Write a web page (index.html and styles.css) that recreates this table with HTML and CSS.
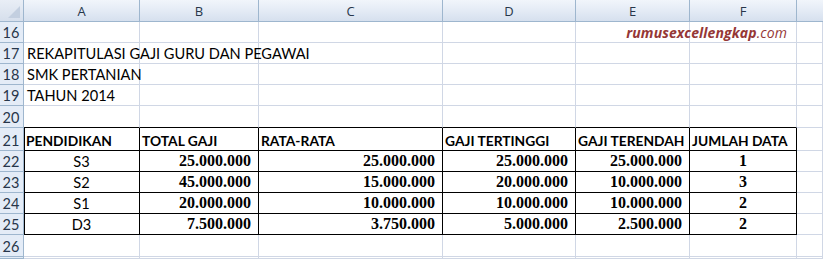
FILE: index.html
```html
<!DOCTYPE html>
<html>
<head>
<meta charset="utf-8">
<link rel="stylesheet" href="styles.css">
</head>
<body>
<div class="sheet">
  <div class="corner"><span class="tri"></span></div>
  <div class="colh">A</div><div class="colh">B</div><div class="colh">C</div><div class="colh">D</div><div class="colh">E</div><div class="colh">F</div><div class="colh last"></div>

  <div class="rowh">16</div>
  <div class="c"></div><div class="c"></div><div class="c"></div><div class="c"></div><div class="c"></div><div class="c wm-cell"><span class="wm"><b>rumusexcellengkap</b>.com</span></div><div class="c"></div>

  <div class="rowh">17</div>
  <div class="c t overflow">REKAPITULASI GAJI GURU DAN PEGAWAI</div><div class="c"></div><div class="c"></div><div class="c"></div><div class="c"></div><div class="c"></div><div class="c"></div>

  <div class="rowh">18</div>
  <div class="c t overflow">SMK PERTANIAN</div><div class="c"></div><div class="c"></div><div class="c"></div><div class="c"></div><div class="c"></div><div class="c"></div>

  <div class="rowh">19</div>
  <div class="c t overflow">TAHUN 2014</div><div class="c"></div><div class="c"></div><div class="c"></div><div class="c"></div><div class="c"></div><div class="c"></div>

  <div class="rowh">20</div>
  <div class="c bt"></div><div class="c bt"></div><div class="c bt"></div><div class="c bt"></div><div class="c bt"></div><div class="c bt"></div><div class="c"></div>

  <div class="rowh">21</div>
  <div class="c b bl th">PENDIDIKAN</div><div class="c b th">TOTAL GAJI</div><div class="c b th">RATA-RATA</div><div class="c b th">GAJI TERTINGGI</div><div class="c b th">GAJI TERENDAH</div><div class="c b th">JUMLAH DATA</div><div class="c"></div>

  <div class="rowh">22</div>
  <div class="c b bl t ctr">S3</div><div class="c b n">25.000.000</div><div class="c b n">25.000.000</div><div class="c b n">25.000.000</div><div class="c b n">25.000.000</div><div class="c b n ctr">1</div><div class="c"></div>

  <div class="rowh">23</div>
  <div class="c b bl t ctr">S2</div><div class="c b n">45.000.000</div><div class="c b n">15.000.000</div><div class="c b n">20.000.000</div><div class="c b n">10.000.000</div><div class="c b n ctr">3</div><div class="c"></div>

  <div class="rowh">24</div>
  <div class="c b bl t ctr">S1</div><div class="c b n">20.000.000</div><div class="c b n">10.000.000</div><div class="c b n">10.000.000</div><div class="c b n">10.000.000</div><div class="c b n ctr">2</div><div class="c"></div>

  <div class="rowh">25</div>
  <div class="c b bl t ctr">D3</div><div class="c b n">7.500.000</div><div class="c b n">3.750.000</div><div class="c b n">5.000.000</div><div class="c b n">2.500.000</div><div class="c b n ctr">2</div><div class="c"></div>

  <div class="rowh">26</div>
  <div class="c"></div><div class="c"></div><div class="c"></div><div class="c"></div><div class="c"></div><div class="c"></div><div class="c"></div>

  <div class="rowh"></div>
  <div class="c"></div><div class="c"></div><div class="c"></div><div class="c"></div><div class="c"></div><div class="c"></div><div class="c"></div>
</div>
</body>
</html>
```
FILE: styles.css
```css
html, body {
  margin: 0;
  padding: 0;
  background: #fff;
  overflow: hidden;
}
.sheet {
  display: grid;
  grid-template-columns: 24px 116px 119px 184px 133px 114px 107px 1fr;
  grid-template-rows: 22px 21px 21px 21px 21px 22px 23px 21px 21px 21px 21px 22px 2px;
  width: 823px;
  font-family: Lato, "Liberation Sans", sans-serif;
  font-size: 14.6px;
  color: #000;
}
.corner {
  background: linear-gradient(#e9eef6, #d6dfec);
  border-right: 1px solid #9eb6ce;
  border-bottom: 1px solid #9eb6ce;
  position: relative;
}
.tri {
  position: absolute;
  right: 3px;
  bottom: 3px;
  width: 0;
  height: 0;
  border-left: 12px solid transparent;
  border-bottom: 12px solid #c3cfe0;
}
.colh {
  background: linear-gradient(#f1f5fb 0%, #e4ebf5 50%, #d6e0ee 100%);
  border-right: 1px solid #9eb6ce;
  border-bottom: 1px solid #9eb6ce;
  display: flex;
  align-items: center;
  justify-content: center;
  font-family: "Open Sans", "Liberation Sans", sans-serif;
  font-size: 13px;
  color: #27364a;
  padding-top: 1px;
}
.colh.last { border-right: none; }
.rowh {
  background: #e4ecf7;
  border-right: 1px solid #9eb6ce;
  border-bottom: 1px solid #9eb6ce;
  display: flex;
  align-items: flex-end;
  justify-content: center;
  padding: 0 1px 1px 0;
  font-family: Lato, "Liberation Sans", sans-serif;
  font-size: 14.5px;
  color: #27364a;
}
.c {
  border-right: 1px solid #d0d7e5;
  border-bottom: 1px solid #d0d7e5;
  display: flex;
  align-items: flex-end;
  justify-content: flex-end;
  padding: 0 3px 1px 3px;
  white-space: nowrap;
  min-width: 0;
}
.c.t { justify-content: flex-start; }
.c.overflow { overflow: visible; position: relative; z-index: 1; }
.c.ctr { justify-content: center; }
.c.bt { border-bottom-color: #000; }
.c.b { border-right-color: #000; border-bottom-color: #000; }
.c.bl { box-shadow: inset 1px 0 0 #000; }
.c.th {
  justify-content: flex-start;
  font-weight: bold;
  font-size: 13.8px;
  padding-left: 2px;
}
.c.n {
  font-family: "Liberation Serif", serif;
  font-weight: bold;
  font-size: 16px;
  padding-right: 7px;
}
.c.n.ctr { padding-right: 3px; }
.wm-cell { overflow: visible; position: relative; }
.wm {
  position: absolute;
  right: 9px;
  bottom: 0;
  font-family: "Open Sans", "Liberation Sans", sans-serif;
  font-style: italic;
  font-size: 14px;
  color: #953736;
  letter-spacing: 0.1px;
}
.wm b { font-weight: bold; }
```
